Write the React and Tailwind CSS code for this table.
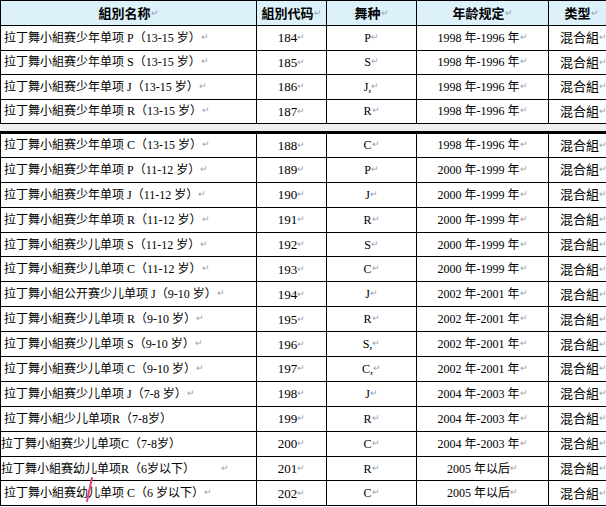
import React from 'react';

const font = { fontFamily: '"Liberation Serif", "Noto Sans CJK SC", serif' };

const upperRows = [
  { name: '拉丁舞小組赛少年单项 P（13-15 岁）', code: '184', dance: 'P', age: '1998 年-1996 年' },
  { name: '拉丁舞小組赛少年单项 S（13-15 岁）', code: '185', dance: 'S', age: '1998 年-1996 年' },
  { name: '拉丁舞小組赛少年单项 J（13-15 岁）', code: '186', dance: 'J,', age: '1998 年-1996 年' },
  { name: '拉丁舞小組赛少年单项 R（13-15 岁）', code: '187', dance: 'R', age: '1998 年-1996 年' },
];

const lowerRows = [
  { name: '拉丁舞小組赛少年单项 C（13-15 岁）', code: '188', dance: 'C', age: '1998 年-1996 年' },
  { name: '拉丁舞小組赛少年单项 P（11-12 岁）', code: '189', dance: 'P', age: '2000 年-1999 年' },
  { name: '拉丁舞小組赛少年单项 J（11-12 岁）', code: '190', dance: 'J', age: '2000 年-1999 年' },
  { name: '拉丁舞小組赛少年单项 R（11-12 岁）', code: '191', dance: 'R', age: '2000 年-1999 年' },
  { name: '拉丁舞小組赛少儿单项 S（11-12 岁）', code: '192', dance: 'S', age: '2000 年-1999 年' },
  { name: '拉丁舞小組赛少儿单项 C（11-12 岁）', code: '193', dance: 'C', age: '2000 年-1999 年' },
  { name: '拉丁舞小組公开赛少儿单项 J（9-10 岁）', code: '194', dance: 'J', age: '2002 年-2001 年' },
  { name: '拉丁舞小組赛少儿单项 R（9-10 岁）', code: '195', dance: 'R', age: '2002 年-2001 年' },
  { name: '拉丁舞小組赛少儿单项 S（9-10 岁）', code: '196', dance: 'S,', age: '2002 年-2001 年' },
  { name: '拉丁舞小組赛少儿单项 C（9-10 岁）', code: '197', dance: 'C,', age: '2002 年-2001 年' },
  { name: '拉丁舞小組赛少儿单项 J（7-8 岁）', code: '198', dance: 'J', age: '2004 年-2003 年' },
  { name: '拉丁舞小組少儿单项R（7-8岁）', code: '199', dance: 'R', age: '2004 年-2003 年', noMark: true },
  { name: '拉丁舞小組赛少儿单项C（7-8岁）', code: '200', dance: 'C', age: '2004 年-2003 年', noMark: true, flush: true },
  { name: '拉丁舞小組赛幼儿单项R（6岁以下）', code: '201', dance: 'R', age: '2005 年以后', farMark: true, flush: true },
  { name: '拉丁舞小組赛幼儿单项 C（6 岁以下）', code: '202', dance: 'C', age: '2005 年以后' },
];

// Word paragraph mark after each cell
const Mark = ({ className = '' }) => (
  <span className={`relative -top-[2px] text-[9px] text-gray-400 font-normal ${className}`}>↵</span>
);

const Cols = () => (
  <colgroup>
    <col className="w-[256px]" />
    <col className="w-[70px]" />
    <col className="w-[90px]" />
    <col className="w-[132px]" />
    <col className="w-[66px]" />
  </colgroup>
);

const Row = ({ row, height }) => (
  <tr className={height}>
    <td className={`border border-black whitespace-nowrap ${row.flush ? 'pl-0' : 'pl-[3px]'}`}>
      {row.name}
      {row.farMark ? <Mark className="ml-[26px]" /> : row.noMark ? null : <Mark />}
    </td>
    <td className="border border-black text-center text-[13px]">
      {row.code}
      <Mark />
    </td>
    <td className="border border-black text-center">
      {row.dance}
      <Mark />
    </td>
    <td className="border border-black text-center">
      {row.age}
      <Mark />
    </td>
    <td className="border border-black pl-[11px] whitespace-nowrap text-[13px]">
      混合組
      <Mark />
    </td>
  </tr>
);

export default function App() {
  return (
    <div className="relative w-[606px] h-[507px] overflow-hidden bg-white text-[12px] text-black leading-none" style={font}>
      <table className="table-fixed border-collapse w-[614px]">
        <Cols />
        <thead>
          <tr className="h-[25px] bg-[#dcf1fa] font-black text-[13px]">
            <th className="border border-black text-center">組別名称<Mark /></th>
            <th className="border border-black text-center">組別代码<Mark /></th>
            <th className="border border-black text-center">舞种<Mark /></th>
            <th className="border border-black text-center">年龄规定<Mark /></th>
            <th className="border border-black text-center">类型<Mark /></th>
          </tr>
        </thead>
        <tbody>
          {upperRows.map((r) => (
            <Row key={r.code} row={r} height="h-[24.5px]" />
          ))}
        </tbody>
      </table>

      <div className="h-[7px] bg-[#efefef]" />

      <table className="table-fixed border-collapse w-[614px] border-t-[3px] border-black">
        <Cols />
        <tbody>
          {lowerRows.map((r) => (
            <Row key={r.code} row={r} height="h-[24.9px]" />
          ))}
        </tbody>
      </table>

      <svg className="absolute left-[84px] top-[477px]" width="10" height="26" viewBox="0 0 10 26">
        <path d="M8 1 L3 24" stroke="#e0457a" strokeWidth="2" strokeLinecap="round" fill="none" />
      </svg>
    </div>
  );
}
